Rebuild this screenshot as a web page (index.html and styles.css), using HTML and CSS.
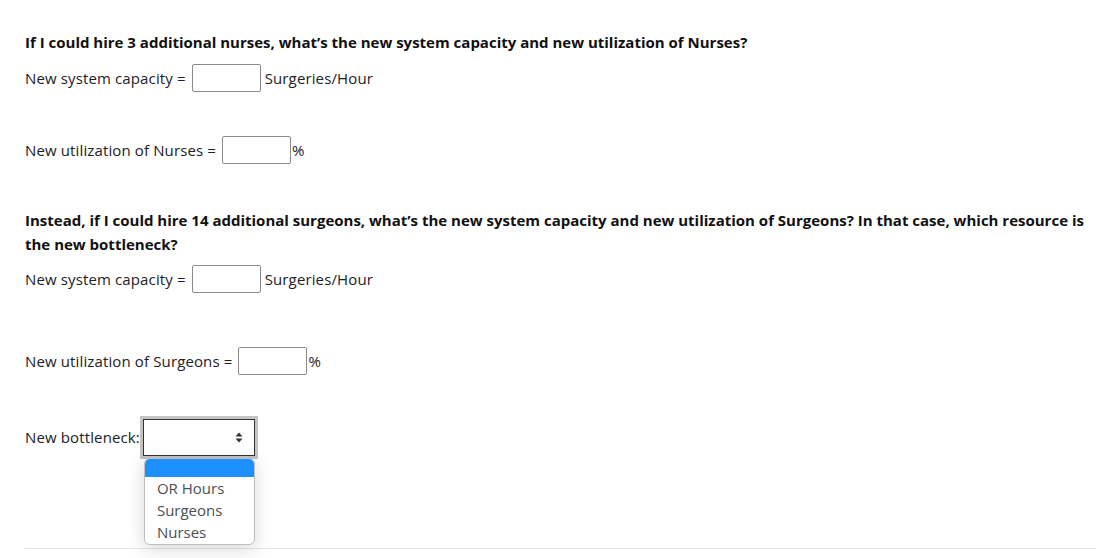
FILE: index.html
```html
<!DOCTYPE html>
<html>
<head>
<meta charset="utf-8">
<link rel="stylesheet" href="styles.css">
</head>
<body>
<div class="page">
  <p class="q q1">If I could hire 3 additional nurses, what’s the new system capacity and new utilization of Nurses?</p>
  <div class="row r1"><span class="lbl">New system capacity =</span><span class="box"></span><span class="unit">Surgeries/Hour</span></div>
  <div class="row r2"><span class="lbl">New utilization of Nurses =</span><span class="box"></span><span class="pct">%</span></div>
  <p class="q q2">Instead, if I could hire 14 additional surgeons, what’s the new system capacity and new utilization of Surgeons? In that case, which resource is the new bottleneck?</p>
  <div class="row r3"><span class="lbl">New system capacity =</span><span class="box"></span><span class="unit">Surgeries/Hour</span></div>
  <div class="row r4"><span class="lbl">New utilization of Surgeons =</span><span class="box"></span><span class="pct">%</span></div>
  <div class="row r5"><span class="lbl bl">New bottleneck:</span>
    <div class="selwrap">
      <div class="sel">
        <svg class="arr" width="8" height="11" viewBox="0 0 8 11"><path d="M4 0.5L7.5 4.5H0.5Z M4 10.5L7.5 6.5H0.5Z" fill="#333"/></svg>
      </div>
      <div class="menu">
        <div class="opt hl"></div>
        <div class="opt">OR Hours</div>
        <div class="opt">Surgeons</div>
        <div class="opt">Nurses</div>
      </div>
    </div>
  </div>
  <div class="rule"></div>
</div>
</body>
</html>
```
FILE: styles.css
```css
html, body { margin: 0; padding: 0; background: #fff; }
body {
  font-family: "Open Sans", "Noto Sans", sans-serif;
  font-size: 15px;
  color: #1d2125;
  width: 1096px;
  height: 558px;
  overflow: hidden;
}
.page { padding: 30px 0 0 25px; }
.q { margin: 0; font-weight: 700; line-height: 24px; color: #111; width: 1062px; }
.row { display: flex; align-items: center; height: 28px; letter-spacing: 0.13px; }
.lbl { white-space: nowrap; }
.box {
  width: 67px; height: 26px;
  border: 1px solid #8a8a8a; border-radius: 2px;
  margin-left: 6px;
}
.unit { margin-left: 4px; }
.pct { margin-left: 1px; }
.r1 { margin-top: 10px; }
.r2 { margin-top: 44px; }
.q2 { margin-top: 44px; }
.r3 { margin-top: 9px; }
.r4 { margin-top: 54px; }
.r5 { margin-top: 40px; height: 44px; align-items: flex-start; }
.bl { line-height: 44px; }
.selwrap { position: relative; margin-left: 0; }
.sel {
  width: 110px; height: 35px;
  border: 1px solid #333;
  outline: 3px solid #c4c4c4;
  margin: 4px 3px 3px 3px;
  display: flex; align-items: center; justify-content: flex-end;
  background: #fff;
}
.arr { margin-right: 11px; }
.menu {
  position: absolute; left: 4px; top: 43px;
  width: 109px;
  background: #fff;
  border: 1px solid #bdbdbd;
  border-radius: 6px;
  overflow: hidden;
  box-shadow: 0 4px 18px rgba(0,0,0,0.16);
  z-index: 2;
  letter-spacing: 0;
}
.opt { height: 22px; line-height: 21px; padding-left: 12px; color: #4a4f55; }
.opt.hl { background: #1e8fff; height: 18px; margin-bottom: 1px; }
.rule { margin-top: 89px; border-top: 1px solid #e6e6e6; }
```
